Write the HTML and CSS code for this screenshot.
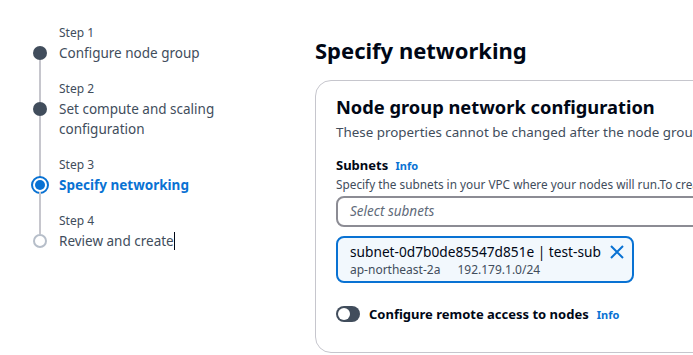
FILE: index.html
```html
<!DOCTYPE html>
<html lang="en">
<head>
    <meta charset="UTF-8">
    <meta name="viewport" content="width=device-width, initial-scale=1.0">
    <title>Add node group - Specify networking</title>
    <link rel="stylesheet" href="styles.css">
</head>
<body>
    <nav class="steps">
        <div class="step done first">
            <div class="track">
                <span class="seg-top"></span>
                <span class="dot"></span>
                <span class="seg-bottom"></span>
            </div>
            <div class="step-text">
                <div class="step-num">Step 1</div>
                <div class="step-title">Configure node group</div>
            </div>
        </div>
        <div class="step done">
            <div class="track">
                <span class="seg-top"></span>
                <span class="dot"></span>
                <span class="seg-bottom"></span>
            </div>
            <div class="step-text">
                <div class="step-num">Step 2</div>
                <div class="step-title">Set compute and scaling configuration</div>
            </div>
        </div>
        <div class="step active">
            <div class="track">
                <span class="seg-top"></span>
                <span class="dot"><span class="dot-inner"></span></span>
                <span class="seg-bottom"></span>
            </div>
            <div class="step-text">
                <div class="step-num">Step 3</div>
                <div class="step-title">Specify networking</div>
            </div>
        </div>
        <div class="step todo last">
            <div class="track">
                <span class="seg-top"></span>
                <span class="dot"></span>
            </div>
            <div class="step-text">
                <div class="step-num">Step 4</div>
                <div class="step-title">Review and create<span class="caret"></span></div>
            </div>
        </div>
    </nav>

    <main class="content">
        <h1>Specify networking</h1>

        <section class="card">
            <h2>Node group network configuration</h2>
            <p class="card-desc">These properties cannot be changed after the node group is created.</p>

            <div class="field">
                <div class="field-label">Subnets <a class="info" href="#">Info</a></div>
                <div class="field-desc">Specify the subnets in your VPC where your nodes will run.To create a new subnet, go to the VPC console.</div>
                <div class="select">Select subnets</div>

                <div class="token">
                    <div class="token-text">
                        <div class="token-name">subnet-0d7b0de85547d851e | test-sub</div>
                        <div class="token-meta"><span>ap-northeast-2a</span><span>192.179.1.0/24</span></div>
                    </div>
                    <svg class="token-close" width="16" height="16" viewBox="0 0 16 16">
                        <path d="M2 2 L14 14 M14 2 L2 14" stroke="#0972d3" stroke-width="2" fill="none"/>
                    </svg>
                </div>
            </div>

            <div class="toggle-row">
                <span class="toggle"><span class="knob"></span></span>
                <span class="toggle-label">Configure remote access to nodes</span>
                <a class="info" href="#">Info</a>
            </div>
        </section>
    </main>
</body>
</html>
```

FILE: styles.css
```css
body {
    font-family: 'Noto Sans', 'Open Sans', sans-serif;
    color: #000716;
    background-color: #fff;
    margin: 0;
    padding: 0;
    display: flex;
    overflow: hidden;
    height: 355px;
}

/* Left wizard navigation */
.steps {
    width: 282px;
    flex-shrink: 0;
    padding: 25px 0 0 33px;
}
.step {
    display: flex;
    gap: 12px;
}
.track {
    width: 14px;
    display: flex;
    flex-direction: column;
    align-items: center;
}
.seg-top {
    width: 2px;
    height: 21px;
    background-color: #c6c6cd;
}
.first .seg-top {
    background-color: transparent;
}
.seg-bottom {
    width: 2px;
    flex: 1;
    background-color: #c6c6cd;
}
.dot {
    width: 14px;
    height: 14px;
    border-radius: 50%;
    box-sizing: border-box;
    flex-shrink: 0;
    display: flex;
    justify-content: center;
    align-items: center;
}
.done .dot {
    background-color: #414d5c;
}
.active .dot {
    width: 18px;
    height: 18px;
    margin: -2px 0;
    border: 2px solid #0972d3;
}
.dot-inner {
    width: 10px;
    height: 10px;
    border-radius: 50%;
    background-color: #0972d3;
}
.todo .dot {
    border: 2px solid #b6bec9;
    background-color: #fff;
}
.step-text {
    padding-bottom: 18px;
}
.step-num {
    font-size: 12px;
    line-height: 16px;
    color: #414d5c;
    margin-bottom: 2px;
}
.step-title {
    font-size: 13.5px;
    line-height: 20px;
    color: #414d5c;
    width: 175px;
}
.active .step-title {
    color: #0972d3;
    font-weight: bold;
}
.caret {
    display: inline-block;
    width: 1px;
    height: 18px;
    background-color: #000716;
    vertical-align: -4px;
}

/* Main content */
.content {
    width: 520px;
    flex-shrink: 0;
}
h1 {
    font-size: 22px;
    line-height: 28px;
    font-weight: bold;
    margin: 36px 0 16px 0;
}
.card {
    border: 1px solid #c6c6cd;
    border-radius: 16px;
    padding: 14px 20px 29px 20px;
}
h2 {
    font-size: 18.3px;
    line-height: 24px;
    font-weight: bold;
    margin: 0;
}
.card-desc {
    font-size: 13.4px;
    line-height: 20px;
    color: #414d5c;
    margin: 3px 0 14px 0;
    white-space: nowrap;
}
.field-label {
    font-size: 13px;
    line-height: 18px;
    font-weight: bold;
}
.info {
    font-size: 11px;
    font-weight: bold;
    color: #0972d3;
    text-decoration: none;
    margin-left: 4px;
}
.field-desc {
    font-size: 11.8px;
    line-height: 18px;
    color: #414d5c;
    white-space: nowrap;
    margin-bottom: 3px;
}
.select {
    border: 2px solid #8c8c94;
    border-radius: 8px;
    height: 27px;
    line-height: 27px;
    padding: 0 12px;
    font-size: 13.5px;
    font-style: italic;
    color: #5f6b7a;
    margin-bottom: 9px;
}
.token {
    width: 275px;
    display: flex;
    justify-content: space-between;
    align-items: flex-start;
    background-color: #f2f8fd;
    border: 2px solid #0972d3;
    border-radius: 8px;
    padding: 4px 7px 3px 12px;
}
.token-name {
    font-size: 13.7px;
    line-height: 20px;
}
.token-meta {
    font-size: 12px;
    line-height: 16px;
    color: #414d5c;
    display: flex;
    gap: 17px;
}
.token-close {
    margin-top: 2px;
}
.toggle-row {
    display: flex;
    align-items: center;
    margin-top: 22px;
}
.toggle {
    width: 24px;
    height: 16px;
    border-radius: 8px;
    background-color: #414d5c;
    display: flex;
    align-items: center;
    padding-left: 2px;
    box-sizing: border-box;
    margin-right: 9px;
}
.knob {
    width: 12px;
    height: 12px;
    border-radius: 50%;
    background-color: #fff;
}
.toggle-label {
    font-size: 13px;
    font-weight: bold;
}
.toggle-row .info {
    margin-left: 8px;
}
```
